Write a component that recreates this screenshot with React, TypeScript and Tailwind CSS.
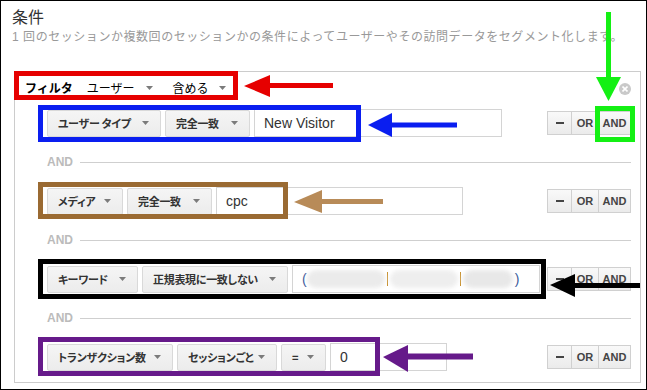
const jp = "font-['Noto_Sans_CJK_JP',sans-serif]";
const latin = "font-['Liberation_Sans','Noto_Sans_CJK_JP',sans-serif]";

function Caret({ className = "" }: { className?: string }) {
  return (
    <svg width="7" height="4" viewBox="0 0 7 4" className={`shrink-0 ${className}`}>
      <polygon points="0,0 7,0 3.5,4" fill="#7b7b7b" />
    </svg>
  );
}

function Dropdown({ label, w }: { label: string; w: string }) {
  return (
    <div
      className={`${w} h-[27px] shrink-0 flex items-center justify-between pl-[10px] pr-[11px] border border-[#d9d9d9] bg-gradient-to-b from-[#f5f5f5] to-[#ececec] rounded-[2px]`}
    >
      <span
        className={`${jp} [font-feature-settings:'palt'] text-[11px] tracking-[-0.3px] font-bold text-[#333] leading-[14px] whitespace-nowrap`}
      >
        {label}
      </span>
      <Caret />
    </div>
  );
}

function Field({ w, children }: { w: string; children?: React.ReactNode }) {
  return (
    <div
      className={`${w} h-[28px] shrink-0 flex items-center pl-[9px] border border-[#d4d4d4] bg-white ${latin} text-[14px] text-[#333]`}
    >
      {children}
    </div>
  );
}

function Logic() {
  const btn =
    "h-[24px] flex items-center justify-center border border-[#d0d0d0] bg-gradient-to-b from-[#f9f9f9] to-[#ebebeb] font-['Liberation_Sans',sans-serif] text-[11px] font-bold text-[#444]";
  return (
    <div className="ml-auto flex">
      <div className={`${btn} w-[25px]`}>
        <span className="w-[8px] h-[2px] bg-[#444]" />
      </div>
      <div className={`${btn} w-[28px] -ml-px`}>OR</div>
      <div className={`${btn} w-[33px] -ml-px`}>AND</div>
    </div>
  );
}

function Separator() {
  return (
    <div className="h-[50px] flex items-center">
      <span className="font-['Liberation_Sans',sans-serif] text-[12px] font-bold text-[#bbbbbb] leading-[14px]">AND</span>
      <span className="ml-[7px] flex-1 h-px bg-[#cfcfcf]" />
    </div>
  );
}

function Blob({ w, tone }: { w: string; tone: string }) {
  return <span className={`${w} ${tone} h-[18px] rounded-[9px] blur-[2px]`} />;
}

export default function App() {
  return (
    <div className="relative w-[647px] h-[390px] border border-black bg-white overflow-hidden">
      <div className="pt-[5px] pl-[11px]">
        <div className={`${jp} text-[16px] leading-[20px] text-[#333]`}>条件</div>
        <div className={`${latin} mt-[3px] text-[12px] tracking-[0.55px] leading-[16px] text-[#999] whitespace-nowrap`}>
          1 回のセッションか複数回のセッションかの条件によってユーザーやその訪問データをセグメント化します。
        </div>
      </div>

      <div className="ml-[13px] mt-[26px] w-[627px] h-[312px] border border-[#cccccc]">
        {/* filter header */}
        <div className={`${jp} h-[37px] flex items-start pt-[9px] pl-[10px] pr-[9px] text-[12px] leading-[14px] text-black`}>
          <span className="font-bold">フィルタ</span>
          <span className="ml-[14px]">ユーザー</span>
          <Caret className="ml-[11px] mt-[5px]" />
          <span className="ml-[20px]">含める</span>
          <Caret className="ml-[10px] mt-[5px]" />
          <span className="ml-auto mt-[2px] w-[12px] h-[12px] rounded-full bg-[#c9c9c9] flex items-center justify-center">
            <svg width="6" height="6" viewBox="0 0 6 6">
              <path d="M0.5 0.5 L5.5 5.5 M5.5 0.5 L0.5 5.5" stroke="#fff" strokeWidth="1.6" />
            </svg>
          </span>
        </div>

        <div className="pl-[32px] pr-[9px]">
          <div className="h-[28px] flex items-center gap-[4px]">
            <Dropdown label="ユーザー タイプ" w="w-[114px]" />
            <Dropdown label="完全一致" w="w-[85px]" />
            <Field w="w-[248px]">New Visitor</Field>
            <Logic />
          </div>

          <Separator />

          <div className="h-[28px] flex items-center gap-[4px]">
            <Dropdown label="メディア" w="w-[76px]" />
            <Dropdown label="完全一致" w="w-[85px]" />
            <Field w="w-[247px]">cpc</Field>
            <Logic />
          </div>

          <Separator />

          <div className="h-[28px] flex items-center gap-[4px]">
            <Dropdown label="キーワード" w="w-[91px]" />
            <Dropdown label="正規表現に一致しない" w="w-[146px]" />
            <Field w="w-[248px]">
              <span className="text-[#3a5a9a]">(</span>
              <Blob w="w-[78px]" tone="bg-[#ebebeb]" />
              <span className="mx-[2px] w-px h-[14px] bg-[#c8902c]" />
              <Blob w="w-[68px]" tone="bg-[#eeeeee]" />
              <span className="mx-[2px] w-px h-[14px] bg-[#c8902c]" />
              <Blob w="w-[50px]" tone="bg-[#e8e8e8]" />
              <span className="ml-[2px] text-[#3a5a9a]">)</span>
            </Field>
            <Logic />
          </div>

          <Separator />

          <div className="h-[28px] flex items-center gap-[4px]">
            <Dropdown label="トランザクション数" w="w-[126px]" />
            <Dropdown label="セッションごと" w="w-[100px]" />
            <Dropdown label="=" w="w-[45px]" />
            <Field w="w-[117px]">0</Field>
            <Logic />
          </div>
        </div>
      </div>

      {/* annotation boxes */}
      <div className="absolute left-[13px] top-[70px] w-[224px] h-[29px] border-[5px] border-[#e60000]" />
      <div className="absolute left-[37px] top-[104px] w-[323px] h-[37px] border-[5px] border-[#0a1ef0]" />
      <div className="absolute left-[594px] top-[105px] w-[40px] h-[36px] border-[5px] border-[#14f014]" />
      <div className="absolute left-[37px] top-[181px] w-[250px] h-[37px] border-[5px] border-[#9a6a32]" />
      <div className="absolute left-[37px] top-[258px] w-[508px] h-[40px] border-[5px] border-black" />
      <div className="absolute left-[37px] top-[336px] w-[342px] h-[39px] border-[5px] border-[#661a8a]" />

      {/* annotation arrows */}
      <svg className="absolute left-[-1px] top-[-1px]" width="647" height="390" viewBox="0 0 647 390">
        <line x1="266" y1="85.5" x2="333" y2="85.5" stroke="#e60000" strokeWidth="5" />
        <polygon points="244,86 270,75 270,97" fill="#e60000" />

        <line x1="608.5" y1="12" x2="608.5" y2="80" stroke="#14f014" strokeWidth="5" />
        <polygon points="596,77 621,77 608.5,101" fill="#14f014" />

        <line x1="388" y1="125" x2="457" y2="125" stroke="#0a1ef0" strokeWidth="5" />
        <polygon points="368,125 392,113 392,137" fill="#0a1ef0" />

        <line x1="318" y1="201.5" x2="383" y2="201.5" stroke="#b88b58" strokeWidth="5" />
        <polygon points="294,202 322,190 322,213" fill="#b88b58" />

        <line x1="572" y1="285.5" x2="640" y2="285.5" stroke="#000" strokeWidth="5" />
        <polygon points="550,285 575,274 575,297" fill="#000" />

        <line x1="404" y1="356.5" x2="473" y2="356.5" stroke="#661a8a" strokeWidth="6" />
        <polygon points="383,357 408,345 408,372" fill="#661a8a" />
      </svg>
    </div>
  );
}
